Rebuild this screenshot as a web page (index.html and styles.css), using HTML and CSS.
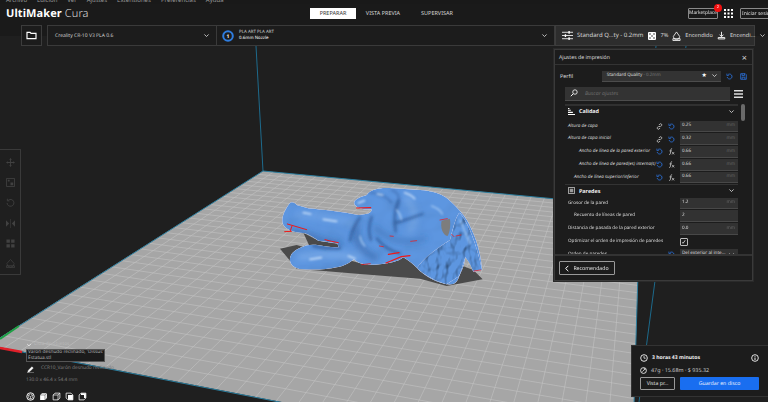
FILE: index.html
```html
<!DOCTYPE html>
<html lang="es">
<head>
<meta charset="utf-8">
<title>UltiMaker Cura</title>
<link rel="stylesheet" href="styles.css">
</head>
<body>
<svg class="sprite" width="0" height="0" aria-hidden="true">
  <symbol id="i-reset" viewBox="0 0 12 12"><path d="M3 3.200A4.200 4.200 0 1 1 2 7" fill="none" stroke="currentColor" stroke-width="1.500"/><path d="M1.500 1v3.400h3.400" fill="none" stroke="currentColor" stroke-width="1.300"/></symbol>
  <symbol id="i-fx" viewBox="0 0 12 12"><path d="M7 1C5 1 5 2.500 4.700 5L4 10C3.800 11 3 11 2 11M2.500 5H6.500" fill="none" stroke="currentColor" stroke-width="1.200"/><path d="M7 7l3.500 4M10.500 7L7 11" fill="none" stroke="currentColor" stroke-width="1.200"/></symbol>
  <symbol id="i-link" viewBox="0 0 12 12"><path d="M5 7l2-2M4.500 5.500L2.500 7.500a2 2 0 0 0 2.800 2.800L7 8.500M7.500 6.500l2-2A2 2 0 0 0 6.700 1.700L5 3.500" fill="none" stroke="currentColor" stroke-width="1.300"/></symbol>
  <symbol id="i-chev" viewBox="0 0 10 10"><path d="M2 3.500l3 3 3-3" fill="none" stroke="currentColor" stroke-width="1.300"/></symbol>
</svg>

<div class="app">
  <svg class="scene" viewBox="0 0 768 402" width="768" height="402" aria-hidden="true">
    <defs>
      <clipPath id="bed-clip"><polygon points="263,171 640,207 632,470 -12,345"/></clipPath>
      <clipPath id="stat-clip"><use href="#stat-shape"/></clipPath>
      <path id="stat-shape" d="M88 101C92 94 104 95 110 105L145 115C190 120 240 124 296 135L322 131C332 128 336 122 334 118C312 120 292 115 284 104C278 92 290 84 320 75C328 58 360 52 388 54C420 56 450 58 480 60C515 62 545 70 565 88C590 110 608 130 622 152C645 195 662 240 666 300L640 305C634 292 632 280 616 262C614 285 606 300 598 318C592 335 585 346 560 343C530 335 505 325 480 303C462 285 445 270 430 262C415 275 385 282 345 284C315 285 295 282 282 268C268 278 255 288 230 292C200 300 150 300 118 297C98 293 88 280 90 265C92 250 105 238 140 226C160 222 175 225 190 228C205 230 220 232 236 232L232 220C205 216 190 214 175 212C165 205 150 195 135 190C118 188 85 186 72 168C60 152 70 125 88 101Z"/>
      <filter id="bump" x="-5%" y="-5%" width="110%" height="110%">
        <feTurbulence type="fractalNoise" baseFrequency=".014" numOctaves="2" seed="7" result="n"/>
        <feDiffuseLighting in="n" surfaceScale="5" diffuseConstant="1.120" lighting-color="#fff" result="l"><feDistantLight azimuth="250" elevation="62"/></feDiffuseLighting>
        <feComposite in="l" in2="SourceAlpha" operator="in" result="lc"/>
        <feBlend in="SourceGraphic" in2="lc" mode="multiply"/>
      </filter>
      <filter id="bumpf" x="-5%" y="-5%" width="110%" height="110%">
        <feTurbulence type="fractalNoise" baseFrequency=".05 .03" numOctaves="2" seed="3" result="n"/>
        <feDiffuseLighting in="n" surfaceScale="9" diffuseConstant="1.120" lighting-color="#fff" result="l"><feDistantLight azimuth="230" elevation="58"/></feDiffuseLighting>
        <feComposite in="l" in2="SourceAlpha" operator="in" result="lc"/>
        <feBlend in="SourceGraphic" in2="lc" mode="multiply"/>
      </filter>
      <filter id="b1" x="-30%" y="-30%" width="160%" height="160%"><feGaussianBlur stdDeviation="3"/></filter>
      <filter id="b2" x="-30%" y="-30%" width="160%" height="160%"><feGaussianBlur stdDeviation="5"/></filter>
      <filter id="b3" x="-30%" y="-30%" width="160%" height="160%"><feGaussianBlur stdDeviation="10"/></filter>
    </defs>

    <rect class="bg" width="768" height="402"/>
    <g class="vol">
      <line x1="256" y1="46" x2="263" y2="171"/>
      <line x1="656" y1="46" x2="640" y2="207"/>
      <line x1="686" y1="46" x2="639" y2="402"/>
    </g>
    <polygon class="bed" points="263,171 640,207 632,470 -12,345"/>
    <g id="bed-grid" class="grid" clip-path="url(#bed-clip)"></g>
    <polyline class="bed-edge" points="0,338 263,171 640,207 632,470"/>
    <line class="bed-edge" x1="22" y1="352" x2="300" y2="406"/>
    <line class="ax-g" x1="0" y1="339" x2="19" y2="326"/>
    <line class="ax-r" x1="0" y1="348" x2="22" y2="352"/>

    <g transform="translate(260 170) scale(.33333)">
      <path class="shadow" d="M60 236L110 225 300 280 480 240 640 300 668 328 560 348 480 326 300 312 110 296Z"/>
      <path class="shadow" d="M130 188L175 212 235 222 236 232 150 232Z"/>
      <use href="#stat-shape" class="stat-base" filter="url(#bump)"/>
      <g clip-path="url(#stat-clip)">
        <g filter="url(#bumpf)">
          <path class="stat-base" d="M470 295C490 265 530 235 570 210 580 170 590 130 600 128 625 160 650 220 666 300L640 305 616 262 598 318 560 343C530 335 500 320 470 295Z"/>
        </g>
        <g filter="url(#b3)" fill="none" stroke-linecap="round">
          <path d="M290 165C280 200 290 235 345 262" stroke="#274f8c" stroke-width="16" opacity=".5"/>
          <path d="M100 182C150 203 200 215 240 222" stroke="#234a86" stroke-width="14" opacity=".55"/>
          <path d="M345 170C375 210 440 225 495 205" stroke="#2a5796" stroke-width="14" opacity=".4"/>
          <path d="M120 262C175 250 240 254 290 262" stroke="#a9cdf4" stroke-width="14" opacity=".45"/>
          <path d="M440 85C465 115 470 150 450 180" stroke="#a9cdf4" stroke-width="18" opacity=".3"/>
          <path d="M110 135C170 135 230 145 280 160" stroke="#a9cdf4" stroke-width="12" opacity=".3"/>
        </g>
        <g filter="url(#b2)" fill="none" stroke-linecap="round">
          <path d="M415 90c-12 30-15 55-8 95M403 160c30-8 55-18 85-28M335 140c-8 25-12 45-2 70M300 142c-15 20-25 40-30 70M160 228c30 8 55 8 80 6M350 205c20 25 45 40 70 45" stroke="#254c88" stroke-width="7" opacity=".7"/>
          <path d="M395 60c20 6 32 30 15 60M330 68c22 0 50 10 65 30" stroke="#3a69ad" stroke-width="6" opacity=".7"/>
        </g>
        <g filter="url(#b1)" fill="none" stroke-linecap="round">
          <path d="M190 148l40 6M130 128l22 4M150 268l34-5M265 258l20 8M295 99l18-7M434 68c12 4 22 8 30 18M352 72l16 3" stroke="#d3e6fb" stroke-width="5" opacity=".85"/>
          <path d="M515 108c14 5 26 12 32 24M410 120c8 8 12 16 14 28M300 200c2 12 6 20 14 28M600 150l30 70" stroke="#b4d3f6" stroke-width="5" opacity=".7"/>
        </g>
      </g>
      <path class="shadow-soft" d="M545 152L570 146C572 165 570 185 563 198 548 195 540 172 545 152Z"/>
      <g fill="none" stroke="#f01818" stroke-linecap="round">
        <path d="M290 114l42-1" stroke-width="3.500"/>
        <path d="M82 162l58 17M74 185l20-1M96 168l-5 14M195 209c12 3 26 7 40 9" stroke-width="3"/>
        <path d="M385 253l32-5M378 279l46-19 26-3" stroke-width="3.500"/>
        <path d="M540 150l22-4M358 228l12 2M390 198l10 1M452 214l18-2M575 193l7 7M603 195l-15 3M642 303l20-3M305 284l26-3" stroke-width="2.200"/>
      </g>
    </g>
  </svg>

  <div class="menubar">
    <span>Archivo</span><span>Edición</span><span>Ver</span><span>Ajustes</span><span>Extensiones</span><span>Preferencias</span><span>Ayuda</span>
  </div>

  <header class="topbar">
    <div class="logo"><b>UltiMaker</b> <span>Cura</span></div>
    <nav class="tabs">
      <a class="tab active">PREPARAR</a><a class="tab">VISTA PREVIA</a><a class="tab">SUPERVISAR</a>
    </nav>
    <div class="topright">
      <a class="outline-btn market">Marketplace<i class="badge">2</i></a>
      <svg class="apps" viewBox="0 0 9 9" width="9" height="9"><path d="M0 0h2v2H0zM3.500 0h2v2h-2zM7 0h2v2H7zM0 3.500h2v2H0zM3.500 3.500h2v2h-2zM7 3.500h2v2H7zM0 7h2v2H0zM3.500 7h2v2h-2zM7 7h2v2H7z" fill="#fff"/></svg>
      <a class="outline-btn login">Iniciar sesión</a>
    </div>
  </header>

  <div class="toolbar">
    <button class="folder">
      <svg viewBox="0 0 12 10" width="11" height="9"><path d="M1 8.500V1.500h3.500l1 1.200H11v5.800z" fill="none" stroke="#fff" stroke-width="1.300"/></svg>
    </button>
    <div class="selectors">
      <div class="sel printer"><span>Creality CR-10 V3 PLA 0.6</span><svg class="chev"><use href="#i-chev"/></svg></div>
      <div class="sel material">
        <svg viewBox="0 0 12 12" width="12" height="12"><circle cx="6" cy="6" r="4.800" fill="#1c1c1c" stroke="#2e7de0" stroke-width="2"/><text x="6" y="8" class="ex">1</text></svg>
        <div class="matinfo"><span>PLA ART PLA ART</span><b>0.6mm Nozzle</b></div>
        <svg class="chev"><use href="#i-chev"/></svg>
      </div>
      <div class="sel setup">
        <svg viewBox="0 0 12 12" width="11" height="11"><path d="M0 2.500h12M0 6h12M0 9.500h12" stroke="#fff" stroke-width=".9"/><path d="M7 1h1.500v3H7zM3 4.500h1.500v3H3zM7 8h1.500v3H7z" fill="#fff"/></svg>
        <span class="q">Standard Q...ty - 0.2mm</span>
        <svg viewBox="0 0 8 8" width="8" height="8"><rect width="8" height="8" rx="1" fill="#fff"/><circle cx="2" cy="2" r=".8" fill="#333"/><circle cx="6" cy="2" r=".8" fill="#333"/><circle cx="4" cy="4" r=".8" fill="#333"/><circle cx="2" cy="6" r=".8" fill="#333"/><circle cx="6" cy="6" r=".8" fill="#333"/></svg>
        <span>7%</span>
        <svg viewBox="0 0 10 11" width="9" height="10"><path d="M5 1L1.500 6a2.500 2.500 0 0 0 7 0zM1 8.500h8v2H1z" fill="none" stroke="#fff" stroke-width=".9"/></svg>
        <span>Encendido</span>
        <svg viewBox="0 0 10 11" width="9" height="9"><path d="M5 1v5.500M2.700 4.500L5 7l2.300-2.500M1 8h8v1.700H1z" fill="none" stroke="#fff" stroke-width="1.100"/></svg>
        <span>Encendi...</span>
        <svg class="chev"><use href="#i-chev"/></svg>
      </div>
    </div>
  </div>

  <aside class="lefttools">
    <svg viewBox="0 0 10 10"><path d="M5 0l1.500 2h-1v2.500H8v-1l2 1.500-2 1.500v-1H5.500V8h1L5 10 3.500 8h1V5.500H2v1L0 5l2-1.500v1h2.500V2h-1z"/></svg>
    <svg viewBox="0 0 10 10"><path d="M.5.500h9v9h-9z" fill="none" stroke="currentColor"/><path d="M2 2h2v2H2zM5 5h3v3H5z"/></svg>
    <svg viewBox="0 0 10 10"><path d="M2.500 2.500A3.800 3.800 0 1 1 1.200 5.500M1.500 .8v2.400h2.400" fill="none" stroke="currentColor"/></svg>
    <svg viewBox="0 0 10 10"><path d="M0 1.500l3.500 3.500L0 8.500zM10 1.500L6.500 5 10 8.500zM4.700 0h.6v10h-.6z"/></svg>
    <svg viewBox="0 0 10 10"><path d="M.5.500h3.800v3.800H.5zM5.700.500h3.800v3.800H5.700zM.5 5.700h3.800v3.800H.5zM5.700 5.700h3.800v3.800H5.700z"/></svg>
    <svg viewBox="0 0 10 10"><path d="M5 .5L1 5a3 3 0 0 0 8 0zM.5 7.500h9v2h-9z" fill="none" stroke="currentColor" stroke-width=".8"/></svg>
  </aside>

  <section class="panel">
    <div class="p-head"><span>Ajustes de impresión</span><span class="close">×</span></div>
    <div class="p-profile">
      <label>Perfil</label>
      <div class="combo"><span>Standard Quality <em>- 0.2mm</em></span><i class="star">★</i><svg class="chev"><use href="#i-chev"/></svg></div>
      <svg class="ic blue"><use href="#i-reset"/></svg>
      <svg class="ic blue" viewBox="0 0 10 10"><path d="M1 1h6.500L9 2.500V9H1zM3 1v2.500h3.500V1M3 9V6h4v3" fill="none" stroke="currentColor" stroke-width="1.200"/></svg>
    </div>
    <div class="p-search">
      <div class="search">
        <svg viewBox="0 0 10 10" width="8" height="8"><circle cx="6.200" cy="3.800" r="2.800" fill="none" stroke="#fff" stroke-width="1"/><path d="M4 6L1 9" stroke="#fff" stroke-width="1.200"/></svg>
        <span>Buscar ajustes</span>
      </div>
      <svg class="burger" viewBox="0 0 9 8" width="9" height="8"><path d="M0 0h9v1.600H0zM0 3.200h9v1.600H0zM0 6.400h9V8H0z" fill="#ddd"/></svg>
    </div>
    <div class="p-list">
      <div class="scrollbar"></div>
      <div class="cat first">
        <svg viewBox="0 0 10 10" width="7" height="7"><path d="M0 8.500h10V10H0zM0 5.500h7V7H0zM0 2.500h4V4H0zM0 0h2v1.500H0z" fill="#fff"/></svg>
        <b>Calidad</b><svg class="chev"><use href="#i-chev"/></svg>
      </div>
      <div class="row it"><label>Altura de capa</label><svg class="ic"><use href="#i-link"/></svg><svg class="ic blue"><use href="#i-reset"/></svg><div class="field"><span>0.25</span><em>mm</em></div></div>
      <div class="row it"><label>Altura de capa inicial</label><svg class="ic"><use href="#i-link"/></svg><svg class="ic blue"><use href="#i-reset"/></svg><div class="field"><span>0.32</span><em>mm</em></div></div>
      <div class="row it ind2"><label>Ancho de línea de la pared exterior</label><svg class="ic blue"><use href="#i-reset"/></svg><svg class="ic"><use href="#i-fx"/></svg><div class="field"><span>0.66</span><em>mm</em></div></div>
      <div class="row it ind2"><label>Ancho de línea de pared(es) interna(s)</label><svg class="ic blue"><use href="#i-reset"/></svg><svg class="ic"><use href="#i-fx"/></svg><div class="field"><span>0.66</span><em>mm</em></div></div>
      <div class="row it ind1"><label>Ancho de línea superior/inferior</label><svg class="ic blue"><use href="#i-reset"/></svg><svg class="ic"><use href="#i-fx"/></svg><div class="field"><span>0.66</span><em>mm</em></div></div>
      <div class="cat">
        <svg viewBox="0 0 10 10" width="7" height="7"><rect x=".5" y=".5" width="9" height="9" rx="1" fill="none" stroke="#fff"/><rect x="2.500" y="2.500" width="5" height="5" fill="#999"/></svg>
        <b>Paredes</b><svg class="chev"><use href="#i-chev"/></svg>
      </div>
      <div class="row"><label>Grosor de la pared</label><div class="field"><span>1.2</span><em>mm</em></div></div>
      <div class="row ind1"><label>Recuento de líneas de pared</label><div class="field"><span>2</span></div></div>
      <div class="row"><label>Distancia de pasada de la pared exterior</label><div class="field"><span>0.0</span><em>mm</em></div></div>
      <div class="row"><label>Optimizar el orden de impresión de paredes</label><div class="check">✓</div></div>
      <div class="row"><label>Orden de paredes</label><svg class="ic blue"><use href="#i-reset"/></svg><div class="field"><span>Del exterior al inte...</span><svg class="chev"><use href="#i-chev"/></svg></div></div>
    </div>
    <div class="p-foot"><a class="outline-btn rec"><svg viewBox="0 0 6 10" width="4" height="7"><path d="M5 1L1 5l4 4" fill="none" stroke="#fff" stroke-width="1.500"/></svg>Recomendado</a></div>
  </section>

  <section class="objects">
    <div class="obj-title"><svg class="chev"><use href="#i-chev"/></svg><span>Lista de objetos</span></div>
    <div class="tip">Varón desnudo reclinado, 'Dissus' -<br>Estatua.stl</div>
    <div class="obj-name">
      <svg viewBox="0 0 10 10" width="7" height="7"><path d="M1 9l1-3 5-5 2 2-5 5zM0 9.500h10" fill="#fff" stroke="#fff" stroke-width=".5"/></svg>
      <span>CCR10_Varón desnudo reclinado</span>
    </div>
    <div class="obj-size">130.0 x 46.4 x 54.4 mm</div>
    <div class="views">
      <svg viewBox="0 0 12 12"><circle cx="6" cy="6" r="5" fill="none" stroke="#fff" stroke-width="1.200"/><path d="M6 2.500l3 1.700v3.600L6 9.500 3 7.800V4.200zM3 4.200L6 6l3-1.800M6 6v3.500" fill="none" stroke="#fff" stroke-width=".8"/></svg>
      <svg viewBox="0 0 12 12"><path d="M1.500 4l2.500-2.500h6.500V8L8 10.500H1.500z" fill="#fff"/><path d="M1.500 4H8v6.500M8 4l2.500-2.500" fill="none" stroke="#222" stroke-width=".6"/></svg>
      <svg viewBox="0 0 12 12"><path d="M1.500 4l2.500-2.500h6.500V8L8 10.500H1.500z" fill="none" stroke="#fff" stroke-width="1"/><path d="M1.500 4H8v6.500M8 4l2.500-2.500" fill="none" stroke="#fff" stroke-width=".9"/></svg>
      <svg viewBox="0 0 12 12"><path d="M1.500 1.500H8L10.500 4v6.500H4L1.500 8z" fill="none" stroke="#fff" stroke-width="1"/><path d="M4 4h6.500v6.500H4z" fill="#fff"/></svg>
      <svg viewBox="0 0 12 12"><path d="M1.500 4l2.500-2.500h6.500V8L8 10.500H1.500z" fill="none" stroke="#fff" stroke-width="1"/><path d="M4 1.500h6.500V8H8V4H4z" fill="#fff"/></svg>
    </div>
  </section>

  <section class="estimate">
    <div class="est-time">
      <svg viewBox="0 0 12 12" width="8" height="8"><circle cx="6" cy="6" r="5" fill="none" stroke="#fff" stroke-width="1.300"/><path d="M6 3v3.300h2.500" fill="none" stroke="#fff" stroke-width="1.100"/></svg>
      <b>3 horas 43 minutos</b>
      <svg class="info" viewBox="0 0 12 12" width="8" height="8"><circle cx="6" cy="6" r="5" fill="none" stroke="#fff" stroke-width="1.300"/><path d="M5.300 3h1.400v1.300H5.300zM5.300 5.300h1.400V9H5.300z" fill="#fff"/></svg>
    </div>
    <div class="est-cost">
      <svg viewBox="0 0 12 12" width="7" height="7"><circle cx="6" cy="6" r="5" fill="none" stroke="#fff" stroke-width="1.400"/><path d="M4 8l4-4M6 3h2.500v2.500" fill="none" stroke="#fff" stroke-width="1.200"/></svg>
      <span>47g · 15.68m · $ 935.32</span>
    </div>
    <div class="est-actions">
      <a class="outline-btn preview">Vista pr...</a>
      <a class="save">Guardar en disco</a>
    </div>
  </section>
</div>
<script src="grid.js"></script>
</body>
</html>
```

FILE: styles.css
```css
* { box-sizing: border-box; }
html, body { margin: 0; padding: 0; width: 768px; height: 402px; overflow: hidden; background: #1f1f1f; }
body { font-family: "Noto Sans", "Open Sans", sans-serif; font-size: 5px; color: #dcdcdc; line-height: 1.2; text-rendering: geometricPrecision; }
.sprite { position: absolute; }
.app { position: relative; width: 768px; height: 402px; overflow: hidden; }
.chev { width: 7px; height: 7px; color: #ccc; flex: none; }

/* 3D viewport */
.scene { position: absolute; left: 0; top: 0; }
.bg { fill: #1f1f1f; }
.vol line { stroke: #1d6a8c; stroke-width: 1; }
.bed { fill: #a6a6a6; }
.grid path { fill: none; stroke: #c2c2c2; stroke-width: .6; }
.bed-edge { fill: none; stroke: #2d7f9f; stroke-width: 1; }
.ax-g { stroke: #1fa045; stroke-width: 2; }
.ax-r { stroke: #e0202a; stroke-width: 2.500; }
.shadow { fill: #4a4a4a; }
.shadow-soft { fill: #7d7d7d; }
.stat-base { fill: #5d96e0; }

/* top */
.menubar { position: relative; height: 4px; overflow: hidden; background: #191919; display: flex; gap: 10px; padding-left: 6px; color: #999; font-size: 6px; line-height: 0; }
.topbar { position: relative; height: 21px; background: #1a1a1a; display: flex; align-items: center; padding: 0 0 2px 6px; }
.topbar::after { content: ""; position: absolute; left: 0; right: 0; top: 21px; height: 11px; background: #1a1a1a; }
.logo { width: 304px; font-size: 11px; color: #fff; letter-spacing: .1px; }
.logo b { font-weight: 700; }
.logo span { font-weight: 300; color: #ddd; }
.tabs { display: flex; align-items: center; font-size: 5.500px; color: #d4d4d4; }
.tab { width: 46px; height: 11px; display: flex; align-items: center; justify-content: center; margin-right: 9px; }
.tab.active { background: #fff; color: #333; }
.tab:nth-child(2) { width: 36px; margin-right: 20px; }
.tab:nth-child(3) { width: 32px; }
.topright { margin-left: auto; display: flex; align-items: center; z-index: 1; }
.outline-btn { position: relative; display: flex; align-items: center; justify-content: center; border: 1px solid #8a8a8a; border-radius: 1px; color: #e0e0e0; }
.market { width: 30px; height: 11px; font-size: 4.800px; }
.badge { position: absolute; right: -5px; top: -5px; width: 8px; height: 8px; border-radius: 50%; background: #f01010; color: #fff; font-size: 4px; font-style: normal; text-align: center; line-height: 8px; }
.apps { margin: 0 7px 0 6px; }
.login { width: 30px; height: 11px; font-size: 5px; white-space: nowrap; overflow: hidden; justify-content: flex-start; padding-left: 1px; margin-right: -2px; }

.toolbar { position: relative; display: flex; height: 21px; padding-left: 21px; }
.folder { width: 21px; height: 21px; padding: 0; background: #1c1c1c; border: 1px solid #3c3c3c; margin-right: 5px; display: flex; align-items: center; justify-content: center; }
.selectors { display: flex; height: 21px; width: 708px; }
.sel { display: flex; align-items: center; height: 21px; border: 1px solid #3a3a3a; background: #1c1c1c; white-space: nowrap; }
.sel svg { flex: none; }
.printer { width: 170px; padding: 0 6px 0 7px; justify-content: space-between; color: #d0d0d0; }
.material { width: 338px; padding: 0 6px 0 5px; gap: 5px; border-left: 0; }
.material .chev { margin-left: auto; }
.matinfo { display: flex; flex-direction: column; font-size: 4.400px; color: #cfcfcf; }
.matinfo b { font-weight: 500; color: #e4e4e4; }
.ex { font-size: 5px; fill: #fff; text-anchor: middle; font-weight: 700; }
.setup { width: 200px; background: #2d2d2d; border-color: #3d3d3d; padding: 0 5px 0 6px; gap: 4px; color: #d6d6d6; font-size: 5.600px; }
.q { margin-right: 1px; font-size: 6px; }
.setup .chev { margin-left: auto; }

/* left tools */
.lefttools { position: absolute; left: 0; top: 149px; width: 21px; height: 126px; background: #1f1f1f; border: 1px solid #3a3a3a; border-left: 0; border-radius: 0 1px 1px 0; display: flex; flex-direction: column; justify-content: space-around; align-items: center; padding: 2px 0 0; color: #414141; }
.lefttools svg { width: 9px; height: 9px; fill: #414141; }

/* settings panel */
.panel { position: absolute; left: 554px; top: 49px; width: 199px; height: 232px; background: #1c1c1c; border: 1px solid #3a3a3a; display: flex; flex-direction: column; box-shadow: 0 0 0 1px #2a2a2a; }
.p-head { height: 15px; flex: none; border-bottom: 1px solid #333; display: flex; align-items: center; justify-content: space-between; padding: 0 5px 0 4px; font-size: 5.200px; color: #dcdcdc; }
.close { font-size: 9px; color: #ddd; line-height: 1; }
.p-profile { height: 21px; flex: none; display: flex; align-items: center; padding: 1px 5px 0 5px; }
.p-profile label { width: 42px; color: #dcdcdc; font-size: 5.400px; }
.combo { width: 120px; height: 11px; background: #333; border-bottom: 1px solid #4c4c4c; display: flex; align-items: center; padding: 0 3px 0 5px; font-size: 4.500px; color: #dcdcdc; }
.combo em { font-style: normal; color: #777; }
.combo span { flex: 1; }
.star { font-style: normal; color: #fff; font-size: 6px; margin-right: 4px; }
.ic { width: 7px; height: 7px; flex: none; color: #ddd; }
.ic.blue { color: #2a6fd6; }
.p-profile .ic { width: 7px; height: 7px; margin-left: 5px; }
.p-profile .ic + .ic { margin-left: 7px; }
.p-search { height: 15px; flex: none; display: flex; align-items: center; padding-left: 10px; gap: 4px; }
.search { width: 165px; height: 14px; background: #333; border-bottom: 1px solid #4c4c4c; display: flex; align-items: center; gap: 7px; padding-left: 5px; color: #6e6e6e; font-style: italic; font-size: 5.200px; }
.p-list { position: relative; flex: 1; min-height: 0; overflow: hidden; padding: 3px 0 0 10px; margin-top: 1px; }
.scrollbar { position: absolute; right: 7px; top: 2px; width: 4px; height: 17px; background: #6a6a6a; border-radius: 2px; }
.cat { width: 173px; height: 13px; display: flex; align-items: center; gap: 4px; padding: 0 3px; border-top: 1px solid #333; }
.cat b { flex: 1; font-size: 5.400px; color: #f0f0f0; font-weight: 700; }
.cat.first { border-top: 2px solid #303030; margin: -1px 0 3px; }
.row { width: 173px; height: 12.800px; display: flex; align-items: center; padding-left: 3px; font-size: 4.600px; color: #dadada; white-space: nowrap; }
.row label { flex: 1; min-width: 0; }
.row.it { font-style: italic; }
.row.ind1 { padding-left: 9px; }
.row.ind2 { padding-left: 14px; }
.row .ic { margin-right: 5px; }
.field { width: 58px; height: 11.500px; background: #323232; border-bottom: 1px solid #484848; display: flex; align-items: center; justify-content: space-between; padding: 0 3px 0 2px; font-style: normal; color: #dcdcdc; flex: none; }
.field em { font-style: normal; color: #666; }
.check { width: 8px; height: 8px; border: 1px solid #bbb; border-radius: 1px; margin-right: 50px; color: #fff; font-size: 6px; line-height: 6px; text-align: center; }
.p-foot { height: 26px; flex: none; border-top: 2px solid #333; padding: 5px 0 0 4px; background: #1c1c1c; }
.rec { width: 56px; height: 14px; gap: 4px; font-size: 5.200px; border-color: #999; }

/* objects */
.objects { position: absolute; left: 26px; top: 340px; width: 110px; font-size: 4.800px; }
.obj-title { display: flex; align-items: center; gap: 2px; height: 9px; color: #b9b9b9; }
.obj-title .chev { color: #eee; width: 6px; height: 6px; }
.tip { width: 79px; height: 13px; background: #1b1b1b; border: 1px solid #555; color: #b0b0b0; padding-left: 1px; line-height: 5.800px; white-space: nowrap; overflow: hidden; }
.obj-name { display: flex; align-items: center; gap: 7px; height: 8px; margin-top: 3px; color: #7d7d7d; padding-left: 1px; white-space: nowrap; }
.obj-size { margin-top: 5px; height: 7px; color: #787878; }
.views { display: flex; gap: 4px; margin-top: 7px; }
.views svg { width: 9px; height: 9px; }

/* estimate */
.estimate { position: absolute; left: 631px; top: 345px; width: 137px; height: 52px; background: #1c1c1c; border: 1px solid #333; border-right: 0; padding: 0 9px 0 8px; display: flex; flex-direction: column; }
.est-time { display: flex; align-items: center; gap: 4px; height: 12px; margin-top: 6px; }
.est-time b { flex: 1; font-size: 5.100px; color: #f2f2f2; }
.est-cost { display: flex; align-items: center; gap: 4px; height: 8px; margin-top: 2px; font-size: 5.400px; color: #c8c8c8; }
.est-actions { display: flex; gap: 5px; margin-top: 3px; }
.preview { width: 35px; height: 13px; font-size: 5.200px; border-color: #999; }
.save { flex: 1; height: 13px; background: #196ef0; color: #e8f0ff; display: flex; align-items: center; justify-content: center; font-size: 5.200px; border-radius: 1px; }
```

FILE: grid.js
```js
// Draws the build plate's 10 mm grid in perspective (projective map of the unit square).
(function () {
  var p = [[263, 171], [640, 207], [632, 470], [-12, 345]];
  var d1x = p[1][0] - p[2][0], d1y = p[1][1] - p[2][1];
  var d2x = p[3][0] - p[2][0], d2y = p[3][1] - p[2][1];
  var sx = p[0][0] - p[1][0] + p[2][0] - p[3][0];
  var sy = p[0][1] - p[1][1] + p[2][1] - p[3][1];
  var den = d1x * d2y - d2x * d1y;
  var g = (sx * d2y - d2x * sy) / den;
  var h = (d1x * sy - sx * d1y) / den;
  var a = p[1][0] - p[0][0] + g * p[1][0], b = p[3][0] - p[0][0] + h * p[3][0], c = p[0][0];
  var d = p[1][1] - p[0][1] + g * p[1][1], e = p[3][1] - p[0][1] + h * p[3][1], f = p[0][1];
  function map(u, v) {
    var w = g * u + h * v + 1;
    return ((a * u + b * v + c) / w).toFixed(1) + " " + ((d * u + e * v + f) / w).toFixed(1);
  }
  var n = 31, s = "";
  for (var i = 1; i < n; i++) {
    s += "M" + map(i / n, 0) + "L" + map(i / n, 1);
    s += "M" + map(0, i / n) + "L" + map(1, i / n);
  }
  var path = document.createElementNS("http://www.w3.org/2000/svg", "path");
  path.setAttribute("d", s);
  document.getElementById("bed-grid").appendChild(path);
})();
```
